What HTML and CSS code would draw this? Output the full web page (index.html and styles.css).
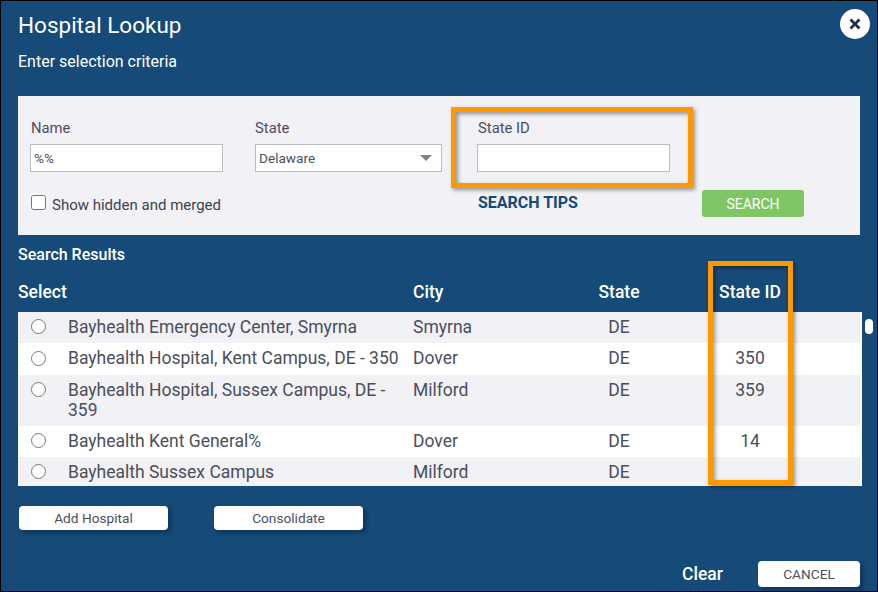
FILE: index.html
```html
<!DOCTYPE html>
<html lang="en">

<head>
    <meta charset="UTF-8">
    <meta name="viewport" content="width=device-width, initial-scale=1.0">
    <title>Hospital Lookup</title>
    <link rel="stylesheet" href="styles.css">
</head>

<body>
    <div class="dialog">
        <header class="dialog-head">
            <h1>Hospital Lookup</h1>
            <button class="close" aria-label="Close">
                <svg width="14" height="14" viewBox="0 0 14 14">
                    <path d="M2.5 2.5 L11.5 11.5 M11.5 2.5 L2.5 11.5" />
                </svg>
            </button>
        </header>
        <h2 class="criteria">Enter selection criteria</h2>

        <section class="filters">
            <div class="field">
                <label for="inName">Name</label>
                <input type="text" id="inName" value="%%" />
            </div>
            <div class="field state-field">
                <label for="inState">State</label>
                <div class="select-wrap">
                    <select id="inState">
                        <option>Delaware</option>
                    </select>
                </div>
            </div>
            <div class="field">
                <label for="inStateId">State ID</label>
                <input type="text" id="inStateId" />
            </div>
            <div class="spacer"></div>

            <label class="check"><input type="checkbox" />Show hidden and merged</label>
            <a class="tips">SEARCH TIPS</a>
            <button class="search">SEARCH</button>
        </section>

        <h3 class="results-title">Search Results</h3>

        <div class="row head">
            <span class="col-name">Select</span>
            <span>City</span>
            <span class="mid">State</span>
            <span class="mid">State ID</span>
        </div>
        <div class="list-wrap">
            <div class="list">
                <div class="row">
                    <input type="radio" name="hospital" />
                    <span>Bayhealth Emergency Center, Smyrna</span>
                    <span>Smyrna</span>
                    <span class="mid">DE</span>
                    <span class="mid"></span>
                </div>
                <div class="row">
                    <input type="radio" name="hospital" />
                    <span>Bayhealth Hospital, Kent Campus, DE - 350</span>
                    <span>Dover</span>
                    <span class="mid">DE</span>
                    <span class="mid">350</span>
                </div>
                <div class="row">
                    <input type="radio" name="hospital" />
                    <span>Bayhealth Hospital, Sussex Campus, DE - 359</span>
                    <span>Milford</span>
                    <span class="mid">DE</span>
                    <span class="mid">359</span>
                </div>
                <div class="row">
                    <input type="radio" name="hospital" />
                    <span>Bayhealth Kent General%</span>
                    <span>Dover</span>
                    <span class="mid">DE</span>
                    <span class="mid">14</span>
                </div>
                <div class="row">
                    <input type="radio" name="hospital" />
                    <span>Bayhealth Sussex Campus</span>
                    <span>Milford</span>
                    <span class="mid">DE</span>
                    <span class="mid"></span>
                </div>
            </div>
            <div class="thumb"></div>
        </div>

        <div class="actions">
            <button class="btn">Add Hospital</button>
            <button class="btn">Consolidate</button>
        </div>

        <footer class="dialog-foot">
            <a class="clear">Clear</a>
            <button class="btn cancel">CANCEL</button>
        </footer>

        <!-- annotation boxes on top of the screenshot -->
        <div class="mark mark-input"></div>
        <div class="mark mark-column"></div>
    </div>
</body>

</html>
```

FILE: styles.css
```css
* {
    box-sizing: border-box;
}

body {
    margin: 0;
    font-family: Roboto, "Liberation Sans", sans-serif;
    color: #4b4f5c;
}

.dialog {
    position: relative;
    width: 878px;
    height: 592px;
    padding: 0 17px;
    background-color: #154a79;
    border: 1px solid #000000;
    overflow: hidden;
}

.dialog-head {
    display: flex;
    justify-content: space-between;
    padding-top: 8px;
}

h1 {
    margin: 1px 0 0;
    font-size: 22.5px;
    line-height: 30px;
    font-weight: 400;
    color: #ffffff;
}

.close {
    width: 30px;
    height: 30px;
    margin-right: -10px;
    padding: 0;
    display: flex;
    align-items: center;
    justify-content: center;
    background-color: #ffffff;
    border: none;
    border-radius: 50%;
}

.close path {
    fill: none;
    stroke: #1f2d4d;
    stroke-width: 2.8;
}

.criteria {
    margin: 12px 0 0;
    font-size: 16px;
    line-height: 20px;
    font-weight: 400;
    color: #ffffff;
}

.filters {
    display: grid;
    grid-template-columns: 225px 222px 225px 102px;
    grid-template-rows: 53px 27px;
    row-gap: 18px;
    align-items: start;
    height: 139px;
    margin-top: 24px;
    padding: 23px 0 0 12px;
    background-color: #f1f1f6;
}

.field label {
    display: block;
    margin-left: 1px;
    margin-bottom: 7px;
    font-size: 14.8px;
    line-height: 18px;
}

.field input,
.field select {
    display: block;
    width: 193px;
    height: 28px;
    padding: 0 3px;
    font-family: inherit;
    font-size: 13.6px;
    color: #4b4f5c;
    background-color: #ffffff;
    border: 1px solid #bdbdc4;
    border-radius: 0;
    outline: none;
}

.state-field label {
    margin-left: 0;
}

.field select {
    width: 187px;
    appearance: none;
}

.select-wrap {
    position: relative;
    width: 187px;
}

.select-wrap::after {
    content: "";
    position: absolute;
    top: 11px;
    right: 10px;
    border-left: 6px solid transparent;
    border-right: 6px solid transparent;
    border-top: 6px solid #808080;
}

.check {
    grid-column: span 2;
    display: flex;
    align-items: center;
    margin: 5px 0 0 1px;
    font-size: 15px;
    line-height: 20px;
    color: #3f434d;
}

.check input {
    align-self: flex-start;
    width: 15px;
    height: 15px;
    margin: 0 6px 0 0;
}

.tips {
    margin: 3px 0 0 1px;
    font-size: 16px;
    line-height: 20px;
    font-weight: 700;
    color: #154a79;
}

.search {
    height: 27px;
    padding: 0;
    font-family: inherit;
    font-size: 14px;
    color: #ffffff;
    background-color: #7fc564;
    border: none;
    border-radius: 3px;
}

.results-title {
    margin: 10px 0 0;
    font-size: 16px;
    line-height: 20px;
    font-weight: 500;
    color: #ffffff;
}

.row {
    display: grid;
    grid-template-columns: 50px 345px 165px 82px 180px;
    align-items: start;
    padding: 5px 0 6.3px;
    font-size: 17.5px;
    line-height: 20px;
}

.row > span:nth-child(2) {
    padding-right: 10px;
}

.head {
    grid-template-columns: 395px 165px 82px 180px;
    margin-top: 17px;
    padding: 0;
    height: 20px;
    font-weight: 500;
    color: #ffffff;
}

.mid {
    text-align: center;
}

.list-wrap {
    position: relative;
    margin-top: 10px;
}

.list {
    width: 844px;
    height: 174px;
    background-color: #ffffff;
    overflow: hidden;
}

.list .row {
    margin-right: 2px;
}

.list .row:nth-of-type(odd) {
    background-color: #f1f1f6;
}

.list .row input {
    width: 15px;
    height: 15px;
    margin: 2.25px 0 0 13px;
}

.thumb {
    position: absolute;
    top: 7px;
    left: 847px;
    width: 8px;
    height: 15px;
    background-color: #ffffff;
    border-radius: 4px;
}

.actions {
    display: flex;
    gap: 46px;
    margin: 20px 0 0 1px;
}

.btn {
    width: 149px;
    height: 24px;
    padding: 0;
    font-family: inherit;
    font-size: 13.7px;
    color: #4b4f5c;
    background-color: #ffffff;
    border: none;
    border-radius: 4px;
    box-shadow: 3px 3px 5px rgba(0, 0, 0, 0.3);
}

.dialog-foot {
    display: flex;
    justify-content: flex-end;
    align-items: center;
    gap: 35px;
    margin-top: 31px;
}

.clear {
    font-size: 17.5px;
    font-weight: 500;
    color: #ffffff;
}

.cancel {
    width: 102px;
    height: 26px;
}

.mark {
    position: absolute;
    border: 5px solid #ff9900;
    box-shadow: 2px 2px 4px rgba(0, 0, 0, 0.4), inset 2px 2px 4px rgba(0, 0, 0, 0.4);
}

.mark-input {
    left: 450px;
    top: 106px;
    width: 242px;
    height: 81px;
}

.mark-column {
    left: 707px;
    top: 260px;
    width: 85px;
    height: 224px;
}
```
